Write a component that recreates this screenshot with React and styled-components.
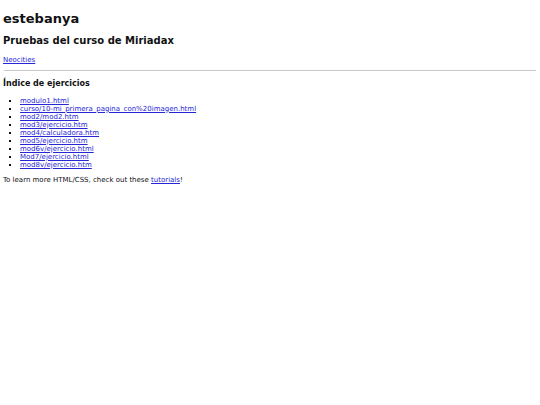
import React from 'react';
import styled, { createGlobalStyle } from 'styled-components';

const GlobalStyle = createGlobalStyle`
  html, body {
    margin: 0;
    padding: 0;
    background: #fff;
  }
  body {
    font-family: "DejaVu Sans", Verdana, sans-serif;
    font-size: 7px;
    color: #111;
  }
`;

const Page = styled.div`
  padding: 4px 4px 4px 3px;
`;

const Title = styled.h1`
  font-size: 13px;
  font-weight: bold;
  margin: 6.5px 0 9.7px;
`;

const Subtitle = styled.h2`
  font-size: 10px;
  font-weight: bold;
  margin: 8px 0 10px;
`;

const Section = styled.h3`
  font-size: 8px;
  font-weight: bold;
  margin: 8.5px 0 8.5px;
`;

const Text = styled.p`
  margin: ${(p) => p.$top || 6.5}px 0 ${(p) => p.$bottom || 6.5}px;
  line-height: 8px;
`;

const Link = styled.a`
  color: #2626d6;
  text-decoration: underline;
`;

const Rule = styled.hr`
  border: none;
  border-top: 1px solid #c8c8c8;
  margin: 4px 0 4px 1px;
`;

const List = styled.ul`
  margin: 6.5px 0 7.5px;
  padding-left: 17px;
  list-style: square;
  line-height: 8px;
`;

const exercises = [
  'modulo1.html',
  'curso/10-mi_primera_pagina_con%20imagen.html',
  'mod2/mod2.htm',
  'mod3/ejercicio.htm',
  'mod4/calculadora.htm',
  'mod5/ejercicio.htm',
  'mod6v/ejercicio.html',
  'Mod7/ejercicio.html',
  'mod8v/ejercicio.htm',
];

const App = () => (
  <Page>
    <GlobalStyle />
    <Title>estebanya</Title>
    <Subtitle>Pruebas del curso de Miriadax</Subtitle>
    <Text $bottom={5.5}><Link href="#">Neocities</Link></Text>
    <Rule />
    <Section>Índice de ejercicios</Section>
    <List>
      {exercises.map((e) => (
        <li key={e}><Link href="#">{e}</Link></li>
      ))}
    </List>
    <Text>To learn more HTML/CSS, check out these <Link href="#">tutorials</Link>!</Text>
  </Page>
);

export default App;
